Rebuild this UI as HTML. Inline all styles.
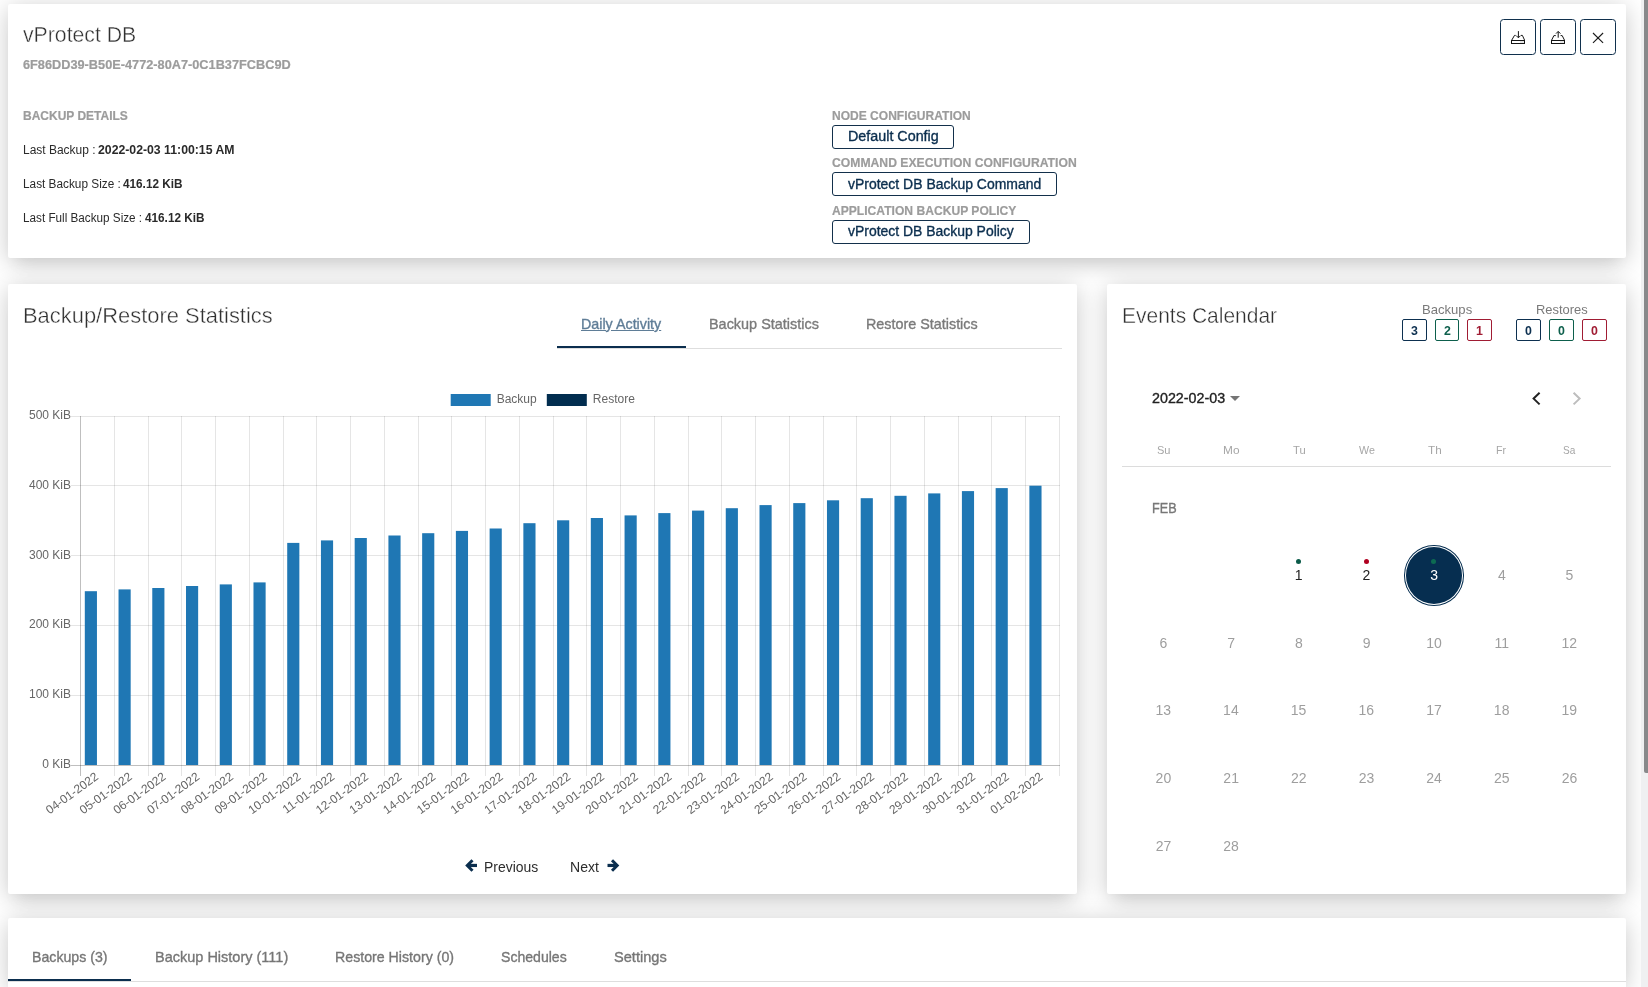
<!-- DOMAINTAG -->
<!DOCTYPE html>
<html lang="en">
<head>
<meta charset="utf-8">
<title>vProtect DB</title>
<style>
html,body{margin:0;padding:0}
html{width:1648px;height:987px;overflow:hidden;background:#fff}
body{width:1648px;height:987px;overflow:hidden;position:relative;background:#fff;font-family:"Liberation Sans",sans-serif;color:#333}
.card{position:absolute;background:#fff;border-radius:2px;box-shadow:0 4px 25px rgba(0,0,0,.22),0 16px 18px -10px rgba(0,0,0,.05)}
.t{position:absolute;white-space:pre;line-height:1;transform-origin:0 50%;font-family:"Liberation Sans",sans-serif}
.obtn{position:absolute;box-sizing:border-box;border:1px solid #10304d;border-radius:3.5px;background:#fff}
.chip{position:absolute;box-sizing:border-box;border:1px solid #13304b;border-radius:3px;background:#fff;height:24px}
.badge{position:absolute;box-sizing:border-box;border:1px solid;border-radius:2px;background:#fff;top:319px;height:22px}
.layer{position:absolute;left:0;top:0;width:1640px;height:987px;will-change:transform;pointer-events:none}
.ln{position:absolute;height:1px;background:#dedede}
.ink{position:absolute;height:2px;background:#0b2e4e}
.dot{position:absolute;width:5px;height:5px;border-radius:50%}
svg{position:absolute;overflow:visible}
svg.chart{left:0;top:0}
.sbt{position:absolute;left:1641px;top:0;width:7px;height:987px;background:#eff0f1}
.sbh{position:absolute;left:1644px;top:0;width:4px;height:773px;background:#88898b;border-radius:0 0 0 2px}
</style>
</head>
<body>
<!-- cards -->
<div class="card" style="left:8px;top:4px;width:1618px;height:254px"></div>
<div class="card" style="left:8px;top:284px;width:1069px;height:610px"></div>
<div class="card" style="left:1107px;top:284px;width:519px;height:610px"></div>
<div class="card" style="left:8px;top:918px;width:1618px;height:69px;border-radius:2px 2px 0 0"></div>

<!-- top-right action buttons -->
<div class="obtn" style="left:1500px;top:19px;width:36px;height:36px"></div>
<div class="obtn" style="left:1540px;top:19px;width:36px;height:36px"></div>
<div class="obtn" style="left:1580px;top:19px;width:36px;height:36px"></div>
<svg style="left:1500px;top:19px" width="116" height="36" viewBox="0 0 116 36" fill="none" stroke="#151515" stroke-width="1">
  <!-- inbox in -->
  <rect x="11.5" y="21.5" width="13" height="3"/>
  <path d="M11.8 21L14.5 16.4H15.6M21 16.4H22.4L24.5 21"/>
  <path d="M18.4 12.1V18.6M16.2 16.6L18.4 18.8L20.6 16.6"/>
  <path d="M20.5 23H23.5" stroke="#9a9a9a" stroke-dasharray="1 1"/>
  <!-- inbox out -->
  <rect x="51.5" y="21.5" width="13" height="3"/>
  <path d="M51.7 21L53.9 16.6H55.8M60.6 16.6H62.2L64.4 21"/>
  <path d="M58.2 12.6V18.7M56 14.6L58.2 12.4L60.4 14.6"/>
  <path d="M60.5 23H63.5" stroke="#9a9a9a" stroke-dasharray="1 1"/>
  <!-- close -->
  <path d="M93 14L103.1 23.8M103.1 14L93 23.8" stroke="#1c1c1c" stroke-width="1.15"/>
</svg>

<!-- config chips -->
<div class="chip" style="left:832px;top:125px;width:122px"></div>
<div class="chip" style="left:832px;top:172px;width:225px"></div>
<div class="chip" style="left:832px;top:220px;width:198px"></div>

<!-- chart tabs -->
<div class="ln" style="left:557px;top:348px;width:505px"></div>
<div class="ink" style="left:557px;top:346px;width:129px"></div>

<div class="layer">
<svg class="chart" width="1100" height="900" viewBox="0 0 1100 900" font-family="'Liberation Sans', sans-serif" font-size="12" fill="#666">
<g fill="none" stroke-width="1" shape-rendering="crispEdges"><path d="M80.5 416.0V775.5" stroke="rgba(0,0,0,0.25)"/><path d="M114.5 416.0V775.5" stroke="rgba(0,0,0,0.1)"/><path d="M148.5 416.0V775.5" stroke="rgba(0,0,0,0.1)"/><path d="M181.5 416.0V775.5" stroke="rgba(0,0,0,0.1)"/><path d="M215.5 416.0V775.5" stroke="rgba(0,0,0,0.1)"/><path d="M249.5 416.0V775.5" stroke="rgba(0,0,0,0.1)"/><path d="M283.5 416.0V775.5" stroke="rgba(0,0,0,0.1)"/><path d="M316.5 416.0V775.5" stroke="rgba(0,0,0,0.1)"/><path d="M350.5 416.0V775.5" stroke="rgba(0,0,0,0.1)"/><path d="M384.5 416.0V775.5" stroke="rgba(0,0,0,0.1)"/><path d="M418.5 416.0V775.5" stroke="rgba(0,0,0,0.1)"/><path d="M451.5 416.0V775.5" stroke="rgba(0,0,0,0.1)"/><path d="M485.5 416.0V775.5" stroke="rgba(0,0,0,0.1)"/><path d="M519.5 416.0V775.5" stroke="rgba(0,0,0,0.1)"/><path d="M553.5 416.0V775.5" stroke="rgba(0,0,0,0.1)"/><path d="M586.5 416.0V775.5" stroke="rgba(0,0,0,0.1)"/><path d="M620.5 416.0V775.5" stroke="rgba(0,0,0,0.1)"/><path d="M654.5 416.0V775.5" stroke="rgba(0,0,0,0.1)"/><path d="M688.5 416.0V775.5" stroke="rgba(0,0,0,0.1)"/><path d="M721.5 416.0V775.5" stroke="rgba(0,0,0,0.1)"/><path d="M755.5 416.0V775.5" stroke="rgba(0,0,0,0.1)"/><path d="M789.5 416.0V775.5" stroke="rgba(0,0,0,0.1)"/><path d="M823.5 416.0V775.5" stroke="rgba(0,0,0,0.1)"/><path d="M856.5 416.0V775.5" stroke="rgba(0,0,0,0.1)"/><path d="M890.5 416.0V775.5" stroke="rgba(0,0,0,0.1)"/><path d="M924.5 416.0V775.5" stroke="rgba(0,0,0,0.1)"/><path d="M958.5 416.0V775.5" stroke="rgba(0,0,0,0.1)"/><path d="M991.5 416.0V775.5" stroke="rgba(0,0,0,0.1)"/><path d="M1025.5 416.0V775.5" stroke="rgba(0,0,0,0.1)"/><path d="M1059.5 416.0V775.5" stroke="rgba(0,0,0,0.1)"/><path d="M70.5 416.5H1060.0" stroke="rgba(0,0,0,0.1)"/><path d="M70.5 485.5H1060.0" stroke="rgba(0,0,0,0.1)"/><path d="M70.5 555.5H1060.0" stroke="rgba(0,0,0,0.1)"/><path d="M70.5 625.5H1060.0" stroke="rgba(0,0,0,0.1)"/><path d="M70.5 695.5H1060.0" stroke="rgba(0,0,0,0.1)"/><path d="M70.5 765.5H1060.0" stroke="rgba(0,0,0,0.25)"/></g>
<g fill="#1f77b4"><rect x="84.80" y="591.2" width="12.15" height="173.8"/><rect x="118.53" y="589.4" width="12.15" height="175.6"/><rect x="152.27" y="588.0" width="12.15" height="177.0"/><rect x="186.00" y="586.0" width="12.15" height="179.0"/><rect x="219.74" y="584.4" width="12.15" height="180.6"/><rect x="253.48" y="582.4" width="12.15" height="182.6"/><rect x="287.21" y="542.9" width="12.15" height="222.1"/><rect x="320.94" y="540.4" width="12.15" height="224.6"/><rect x="354.68" y="538.0" width="12.15" height="227.0"/><rect x="388.42" y="535.5" width="12.15" height="229.5"/><rect x="422.15" y="533.2" width="12.15" height="231.8"/><rect x="455.88" y="530.9" width="12.15" height="234.1"/><rect x="489.62" y="528.5" width="12.15" height="236.5"/><rect x="523.36" y="523.2" width="12.15" height="241.8"/><rect x="557.09" y="520.3" width="12.15" height="244.7"/><rect x="590.82" y="518.0" width="12.15" height="247.0"/><rect x="624.56" y="515.4" width="12.15" height="249.6"/><rect x="658.29" y="513.1" width="12.15" height="251.9"/><rect x="692.03" y="510.6" width="12.15" height="254.4"/><rect x="725.76" y="508.2" width="12.15" height="256.8"/><rect x="759.50" y="505.1" width="12.15" height="259.9"/><rect x="793.23" y="503.1" width="12.15" height="261.9"/><rect x="826.97" y="500.3" width="12.15" height="264.7"/><rect x="860.70" y="498.2" width="12.15" height="266.8"/><rect x="894.44" y="495.8" width="12.15" height="269.2"/><rect x="928.17" y="493.4" width="12.15" height="271.6"/><rect x="961.91" y="491.1" width="12.15" height="273.9"/><rect x="995.64" y="488.1" width="12.15" height="276.9"/><rect x="1029.38" y="485.7" width="12.15" height="279.3"/></g>
<rect x="450.7" y="394" width="40" height="12" fill="#1f77b4"/>
<rect x="546.8" y="394" width="40" height="12" fill="#022d4f"/>
<text x="496.7" y="402.8">Backup</text><text x="592.8" y="402.8">Restore</text>
<text x="71.0" y="419.0" text-anchor="end">500 KiB</text>
<text x="71.0" y="488.8" text-anchor="end">400 KiB</text>
<text x="71.0" y="558.6" text-anchor="end">300 KiB</text>
<text x="71.0" y="628.4" text-anchor="end">200 KiB</text>
<text x="71.0" y="698.2" text-anchor="end">100 KiB</text>
<text x="71.0" y="768.0" text-anchor="end">0 KiB</text>
<text transform="translate(97.70,776.4) rotate(-36)" x="0" y="2.5" text-anchor="end">04-01-2022</text>
<text transform="translate(131.44,776.4) rotate(-36)" x="0" y="2.5" text-anchor="end">05-01-2022</text>
<text transform="translate(165.17,776.4) rotate(-36)" x="0" y="2.5" text-anchor="end">06-01-2022</text>
<text transform="translate(198.91,776.4) rotate(-36)" x="0" y="2.5" text-anchor="end">07-01-2022</text>
<text transform="translate(232.64,776.4) rotate(-36)" x="0" y="2.5" text-anchor="end">08-01-2022</text>
<text transform="translate(266.38,776.4) rotate(-36)" x="0" y="2.5" text-anchor="end">09-01-2022</text>
<text transform="translate(300.11,776.4) rotate(-36)" x="0" y="2.5" text-anchor="end">10-01-2022</text>
<text transform="translate(333.84,776.4) rotate(-36)" x="0" y="2.5" text-anchor="end">11-01-2022</text>
<text transform="translate(367.58,776.4) rotate(-36)" x="0" y="2.5" text-anchor="end">12-01-2022</text>
<text transform="translate(401.31,776.4) rotate(-36)" x="0" y="2.5" text-anchor="end">13-01-2022</text>
<text transform="translate(435.05,776.4) rotate(-36)" x="0" y="2.5" text-anchor="end">14-01-2022</text>
<text transform="translate(468.78,776.4) rotate(-36)" x="0" y="2.5" text-anchor="end">15-01-2022</text>
<text transform="translate(502.52,776.4) rotate(-36)" x="0" y="2.5" text-anchor="end">16-01-2022</text>
<text transform="translate(536.25,776.4) rotate(-36)" x="0" y="2.5" text-anchor="end">17-01-2022</text>
<text transform="translate(569.99,776.4) rotate(-36)" x="0" y="2.5" text-anchor="end">18-01-2022</text>
<text transform="translate(603.73,776.4) rotate(-36)" x="0" y="2.5" text-anchor="end">19-01-2022</text>
<text transform="translate(637.46,776.4) rotate(-36)" x="0" y="2.5" text-anchor="end">20-01-2022</text>
<text transform="translate(671.20,776.4) rotate(-36)" x="0" y="2.5" text-anchor="end">21-01-2022</text>
<text transform="translate(704.93,776.4) rotate(-36)" x="0" y="2.5" text-anchor="end">22-01-2022</text>
<text transform="translate(738.67,776.4) rotate(-36)" x="0" y="2.5" text-anchor="end">23-01-2022</text>
<text transform="translate(772.40,776.4) rotate(-36)" x="0" y="2.5" text-anchor="end">24-01-2022</text>
<text transform="translate(806.13,776.4) rotate(-36)" x="0" y="2.5" text-anchor="end">25-01-2022</text>
<text transform="translate(839.87,776.4) rotate(-36)" x="0" y="2.5" text-anchor="end">26-01-2022</text>
<text transform="translate(873.61,776.4) rotate(-36)" x="0" y="2.5" text-anchor="end">27-01-2022</text>
<text transform="translate(907.34,776.4) rotate(-36)" x="0" y="2.5" text-anchor="end">28-01-2022</text>
<text transform="translate(941.08,776.4) rotate(-36)" x="0" y="2.5" text-anchor="end">29-01-2022</text>
<text transform="translate(974.81,776.4) rotate(-36)" x="0" y="2.5" text-anchor="end">30-01-2022</text>
<text transform="translate(1008.55,776.4) rotate(-36)" x="0" y="2.5" text-anchor="end">31-01-2022</text>
<text transform="translate(1042.28,776.4) rotate(-36)" x="0" y="2.5" text-anchor="end">01-02-2022</text>
</svg>
</div>

<!-- chart pager arrows -->
<svg style="left:465px;top:858px" width="13" height="15" viewBox="0 0 13 15" fill="none" stroke="#0b2e4e"><path d="M7.5 2.2L2.3 7.45L7.5 12.7" stroke-width="3"/><path d="M3 7.45H12" stroke-width="3.2"/></svg>
<svg style="left:607px;top:858px" width="13" height="15" viewBox="0 0 13 15" fill="none" stroke="#0b2e4e"><path d="M5 2.2L10.2 7.45L5 12.7" stroke-width="3"/><path d="M9.5 7.45H0.5" stroke-width="3.2"/></svg>

<!-- calendar: badges -->
<div class="badge" style="left:1402px;width:25px;border-color:#0d3050"></div>
<div class="badge" style="left:1435px;width:24px;border-color:#0d5f4c"></div>
<div class="badge" style="left:1467px;width:25px;border-color:#a01c33"></div>
<div class="badge" style="left:1516px;width:25px;border-color:#0d3050"></div>
<div class="badge" style="left:1549px;width:25px;border-color:#0d5f4c"></div>
<div class="badge" style="left:1582px;width:25px;border-color:#a01c33"></div>

<!-- calendar header -->
<svg style="left:1230px;top:396px" width="10" height="5" viewBox="0 0 10 5"><path d="M0 0H10L5 5Z" fill="#757575"/></svg>
<svg style="left:1528px;top:388px" width="60" height="22" viewBox="0 0 60 22" fill="none" stroke-width="2">
  <path d="M11.6 4.8L5.6 10.6L11.6 16.4" stroke="#222"/>
  <path d="M45.6 4.8L51.6 10.6L45.6 16.4" stroke="#bdbdbd"/>
</svg>
<div class="ln" style="left:1122px;top:466px;width:489px;background:#dcdcdc"></div>

<!-- calendar: selected day + event dots -->
<div style="position:absolute;left:1404.1px;top:545px;width:60px;height:60.6px;border-radius:50%;background:#062e50"></div>
<div style="position:absolute;left:1405.1px;top:546px;width:56px;height:56.6px;border-radius:50%;border:1px solid #fff"></div>
<div class="dot" style="left:1295.9px;top:558.8px;background:#0b5b49"></div>
<div class="dot" style="left:1363.6px;top:558.8px;background:#b00020"></div>
<div class="dot" style="left:1431.3px;top:558.8px;background:#0d6b52"></div>

<!-- bottom tabs -->
<div class="ln" style="left:8px;top:981px;width:1618px"></div>
<div class="ink" style="left:8px;top:979px;width:123px"></div>

<div class="layer">
<div class="t" style="left:23.48px;top:24px;font-size:22px;font-weight:400;color:#303030;transform:scaleX(0.9645);-webkit-text-stroke:0.4px #fff;">vProtect DB</div>
<div class="t" style="left:23.20px;top:59px;font-size:12px;font-weight:700;color:#9c9c9c;transform:scaleX(1.0619);-webkit-text-stroke:0.2px currentColor;">6F86DD39-B50E-4772-80A7-0C1B37FCBC9D</div>
<div class="t" style="left:22.85px;top:110px;font-size:12px;font-weight:700;color:#9c9c9c;transform:scaleX(0.9993);-webkit-text-stroke:0.2px currentColor;">BACKUP DETAILS</div>
<div class="t" style="left:22.60px;top:144px;font-size:12px;font-weight:400;color:#2a2a2a;transform:scaleX(0.9982);">Last Backup :</div>
<div class="t" style="left:97.52px;top:144px;font-size:12px;font-weight:700;color:#2a2a2a;transform:scaleX(1.0213);">2022-02-03 11:00:15 AM</div>
<div class="t" style="left:22.62px;top:178px;font-size:12px;font-weight:400;color:#2a2a2a;transform:scaleX(0.9838);">Last Backup Size :</div>
<div class="t" style="left:123.08px;top:178px;font-size:12px;font-weight:700;color:#2a2a2a;transform:scaleX(0.9800);">416.12 KiB</div>
<div class="t" style="left:22.62px;top:212px;font-size:12px;font-weight:400;color:#2a2a2a;transform:scaleX(0.9758);">Last Full Backup Size :</div>
<div class="t" style="left:144.58px;top:212px;font-size:12px;font-weight:700;color:#2a2a2a;transform:scaleX(0.9800);">416.12 KiB</div>
<div class="t" style="left:831.65px;top:110px;font-size:12px;font-weight:700;color:#9c9c9c;transform:scaleX(1.0024);-webkit-text-stroke:0.2px currentColor;">NODE CONFIGURATION</div>
<div class="t" style="left:831.89px;top:157px;font-size:12px;font-weight:700;color:#9c9c9c;transform:scaleX(1.0148);-webkit-text-stroke:0.2px currentColor;">COMMAND EXECUTION CONFIGURATION</div>
<div class="t" style="left:832.15px;top:205px;font-size:12px;font-weight:700;color:#9c9c9c;transform:scaleX(1.0081);-webkit-text-stroke:0.2px currentColor;">APPLICATION BACKUP POLICY</div>
<div class="t" style="left:847.95px;top:129px;font-size:14px;font-weight:400;color:#0b2e4e;transform:scaleX(1.0225);-webkit-text-stroke:0.35px currentColor;">Default Config</div>
<div class="t" style="left:848.20px;top:177px;font-size:14px;font-weight:400;color:#0b2e4e;transform:scaleX(0.9975);-webkit-text-stroke:0.35px currentColor;">vProtect DB Backup Command</div>
<div class="t" style="left:848.20px;top:224px;font-size:14px;font-weight:400;color:#0b2e4e;transform:scaleX(0.9958);-webkit-text-stroke:0.35px currentColor;">vProtect DB Backup Policy</div>
<div class="t" style="left:22.56px;top:305px;font-size:22px;font-weight:400;color:#303030;transform:scaleX(0.9963);-webkit-text-stroke:0.4px #fff;">Backup/Restore Statistics</div>
<div class="t" style="left:580.81px;top:316px;font-size:15px;font-weight:400;color:#5f7d97;transform:scaleX(0.9528);-webkit-text-stroke:0.35px currentColor;text-decoration:underline;">Daily Activity</div>
<div class="t" style="left:709.30px;top:316px;font-size:15px;font-weight:400;color:#7a7a7a;transform:scaleX(0.9620);-webkit-text-stroke:0.35px currentColor;">Backup Statistics</div>
<div class="t" style="left:866.20px;top:316px;font-size:15px;font-weight:400;color:#7a7a7a;transform:scaleX(0.9567);-webkit-text-stroke:0.35px currentColor;">Restore Statistics</div>
<div class="t" style="left:484.48px;top:860px;font-size:14px;font-weight:400;color:#2d2d2d;transform:scaleX(0.9948);">Previous</div>
<div class="t" style="left:570.47px;top:860px;font-size:14px;font-weight:400;color:#2d2d2d;transform:scaleX(1.0027);">Next</div>
<div class="t" style="left:1121.83px;top:305px;font-size:22px;font-weight:400;color:#303030;transform:scaleX(0.9533);-webkit-text-stroke:0.4px #fff;">Events Calendar</div>
<div class="t" style="left:1421.69px;top:303px;font-size:13px;font-weight:400;color:#7a7a7a;transform:scaleX(1.0067);">Backups</div>
<div class="t" style="left:1535.51px;top:303px;font-size:13px;font-weight:400;color:#7a7a7a;transform:scaleX(0.9936);">Restores</div>
<div class="t" style="left:1151.63px;top:391px;font-size:14px;font-weight:400;color:#222;transform:scaleX(1.0206);-webkit-text-stroke:0.35px currentColor;">2022-02-03</div>
<div class="t" style="left:1151.84px;top:500px;font-size:15px;font-weight:400;color:#777;transform:scaleX(0.8442);-webkit-text-stroke:0.35px currentColor;">FEB</div>
<div class="t" style="left:1156.80px;top:445px;font-size:11px;font-weight:400;color:#a6a6a6;transform:scaleX(1.0041);">Su</div>
<div class="t" style="left:1222.66px;top:445px;font-size:11px;font-weight:400;color:#a6a6a6;transform:scaleX(1.0786);">Mo</div>
<div class="t" style="left:1292.75px;top:445px;font-size:11px;font-weight:400;color:#a6a6a6;transform:scaleX(1.0174);">Tu</div>
<div class="t" style="left:1358.70px;top:445px;font-size:11px;font-weight:400;color:#a6a6a6;transform:scaleX(0.9701);">We</div>
<div class="t" style="left:1427.53px;top:445px;font-size:11px;font-weight:400;color:#a6a6a6;transform:scaleX(1.0611);">Th</div>
<div class="t" style="left:1496.35px;top:445px;font-size:11px;font-weight:400;color:#a6a6a6;transform:scaleX(0.9707);">Fr</div>
<div class="t" style="left:1563.04px;top:445px;font-size:11px;font-weight:400;color:#a6a6a6;transform:scaleX(0.9154);">Sa</div>
<div class="t" style="left:31.82px;top:949px;font-size:15px;font-weight:400;color:#767676;transform:scaleX(0.9438);-webkit-text-stroke:0.35px currentColor;">Backups (3)</div>
<div class="t" style="left:154.69px;top:949px;font-size:15px;font-weight:400;color:#767676;transform:scaleX(0.9666);-webkit-text-stroke:0.35px currentColor;">Backup History (111)</div>
<div class="t" style="left:335.32px;top:949px;font-size:15px;font-weight:400;color:#767676;transform:scaleX(0.9455);-webkit-text-stroke:0.35px currentColor;">Restore History (0)</div>
<div class="t" style="left:501.30px;top:949px;font-size:15px;font-weight:400;color:#767676;transform:scaleX(0.9382);-webkit-text-stroke:0.35px currentColor;">Schedules</div>
<div class="t" style="left:614.27px;top:949px;font-size:15px;font-weight:400;color:#767676;transform:scaleX(0.9740);-webkit-text-stroke:0.35px currentColor;">Settings</div>
<div class="t" style="left:1411.17px;top:324px;font-size:13px;font-weight:700;color:#0d3050;transform:scaleX(0.9500);">3</div>
<div class="t" style="left:1443.56px;top:324px;font-size:13px;font-weight:700;color:#0d5f4c;transform:scaleX(0.9500);">2</div>
<div class="t" style="left:1475.88px;top:324px;font-size:13px;font-weight:700;color:#a01c33;transform:scaleX(0.9500);">1</div>
<div class="t" style="left:1525.06px;top:324px;font-size:13px;font-weight:700;color:#0d3050;transform:scaleX(0.9500);">0</div>
<div class="t" style="left:1558.06px;top:324px;font-size:13px;font-weight:700;color:#0d5f4c;transform:scaleX(0.9500);">0</div>
<div class="t" style="left:1591.06px;top:324px;font-size:13px;font-weight:700;color:#a01c33;transform:scaleX(0.9500);">0</div>
<div class="t" style="left:1294.78px;top:568px;font-size:14px;font-weight:400;color:#222;transform:scaleX(1.0000);">1</div>
<div class="t" style="left:1362.57px;top:568px;font-size:14px;font-weight:400;color:#222;transform:scaleX(1.0000);">2</div>
<div class="t" style="left:1430.37px;top:568px;font-size:14px;font-weight:400;color:#fff;transform:scaleX(1.0000);">3</div>
<div class="t" style="left:1498.04px;top:568px;font-size:14px;font-weight:400;color:#9e9e9e;transform:scaleX(1.0000);">4</div>
<div class="t" style="left:1565.58px;top:568px;font-size:14px;font-weight:400;color:#9e9e9e;transform:scaleX(1.0000);">5</div>
<div class="t" style="left:1159.56px;top:636px;font-size:14px;font-weight:400;color:#9e9e9e;transform:scaleX(1.0000);">6</div>
<div class="t" style="left:1227.23px;top:636px;font-size:14px;font-weight:400;color:#9e9e9e;transform:scaleX(1.0000);">7</div>
<div class="t" style="left:1294.96px;top:636px;font-size:14px;font-weight:400;color:#9e9e9e;transform:scaleX(1.0000);">8</div>
<div class="t" style="left:1362.63px;top:636px;font-size:14px;font-weight:400;color:#9e9e9e;transform:scaleX(1.0000);">9</div>
<div class="t" style="left:1426.18px;top:636px;font-size:14px;font-weight:400;color:#9e9e9e;transform:scaleX(1.0000);">10</div>
<div class="t" style="left:1494.41px;top:636px;font-size:14px;font-weight:400;color:#9e9e9e;transform:scaleX(1.0000);">11</div>
<div class="t" style="left:1561.58px;top:636px;font-size:14px;font-weight:400;color:#9e9e9e;transform:scaleX(1.0000);">12</div>
<div class="t" style="left:1155.50px;top:703px;font-size:14px;font-weight:400;color:#9e9e9e;transform:scaleX(1.0000);">13</div>
<div class="t" style="left:1223.11px;top:703px;font-size:14px;font-weight:400;color:#9e9e9e;transform:scaleX(1.0000);">14</div>
<div class="t" style="left:1290.84px;top:703px;font-size:14px;font-weight:400;color:#9e9e9e;transform:scaleX(1.0000);">15</div>
<div class="t" style="left:1358.51px;top:703px;font-size:14px;font-weight:400;color:#9e9e9e;transform:scaleX(1.0000);">16</div>
<div class="t" style="left:1426.24px;top:703px;font-size:14px;font-weight:400;color:#9e9e9e;transform:scaleX(1.0000);">17</div>
<div class="t" style="left:1493.85px;top:703px;font-size:14px;font-weight:400;color:#9e9e9e;transform:scaleX(1.0000);">18</div>
<div class="t" style="left:1561.58px;top:703px;font-size:14px;font-weight:400;color:#9e9e9e;transform:scaleX(1.0000);">19</div>
<div class="t" style="left:1155.62px;top:771px;font-size:14px;font-weight:400;color:#9e9e9e;transform:scaleX(1.0000);">20</div>
<div class="t" style="left:1223.36px;top:771px;font-size:14px;font-weight:400;color:#9e9e9e;transform:scaleX(1.0000);">21</div>
<div class="t" style="left:1291.03px;top:771px;font-size:14px;font-weight:400;color:#9e9e9e;transform:scaleX(1.0000);">22</div>
<div class="t" style="left:1358.63px;top:771px;font-size:14px;font-weight:400;color:#9e9e9e;transform:scaleX(1.0000);">23</div>
<div class="t" style="left:1426.24px;top:771px;font-size:14px;font-weight:400;color:#9e9e9e;transform:scaleX(1.0000);">24</div>
<div class="t" style="left:1493.97px;top:771px;font-size:14px;font-weight:400;color:#9e9e9e;transform:scaleX(1.0000);">25</div>
<div class="t" style="left:1561.64px;top:771px;font-size:14px;font-weight:400;color:#9e9e9e;transform:scaleX(1.0000);">26</div>
<div class="t" style="left:1155.69px;top:839px;font-size:14px;font-weight:400;color:#9e9e9e;transform:scaleX(1.0000);">27</div>
<div class="t" style="left:1223.30px;top:839px;font-size:14px;font-weight:400;color:#9e9e9e;transform:scaleX(1.0000);">28</div>
</div>

<!-- page scrollbar -->
<div class="sbt"></div>
<div class="sbh"></div>
</body>
</html>
